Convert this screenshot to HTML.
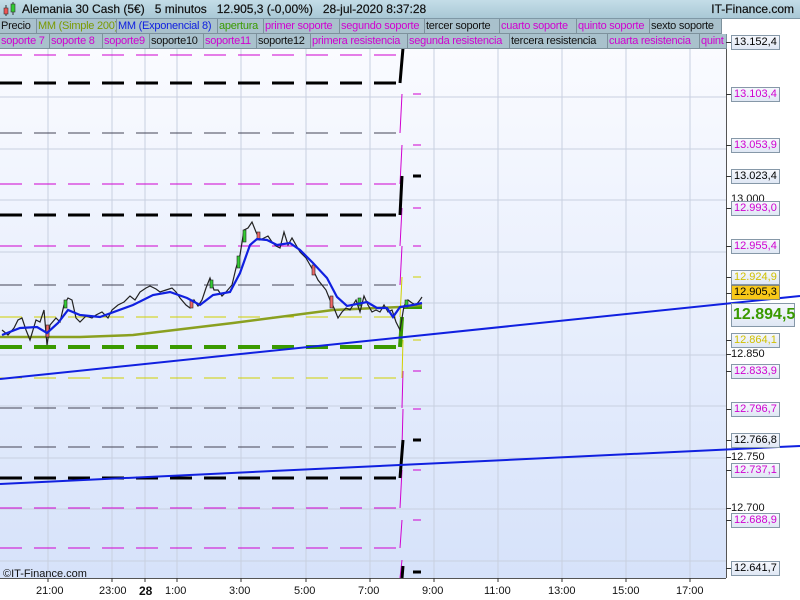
<!DOCTYPE html>
<html><head><meta charset="utf-8"><style>
*{margin:0;padding:0;box-sizing:border-box}
body{width:800px;height:600px;overflow:hidden;background:#fff;font-family:"Liberation Sans",sans-serif;position:relative}
#hdr{position:absolute;left:0;top:0;width:800px;height:19px;background:linear-gradient(#c4dde8,#a9c8d6);border-bottom:1px solid #7f98a6;font-size:12px;line-height:19px;color:#111;-webkit-text-stroke:0.2px #111}
.row{position:absolute;left:0;height:15px;display:flex;font-size:11px;line-height:14px;letter-spacing:-0.25px}
.row span{background:#a9c1cc;border-right:1px solid #7d919c;border-bottom:1px solid #7d919c;padding-left:1px;white-space:nowrap;overflow:hidden}
.m{color:#d000d0}.k{color:#111}.o{color:#7a9a00}.b{color:#1020e0}.g{color:#3a9a00}
.lb{position:absolute;left:731px;height:15px;width:49px;border:1px solid #8698a8;background:linear-gradient(#f6f8fd,#dfe7f4);font-size:11px;line-height:13px;padding-left:2px}
.tx{position:absolute;left:731px;font-size:11px;line-height:13px;color:#111}
.tk{position:absolute;left:726px;width:5px;height:1px;background:#333}
.ax{position:absolute;top:585px;font-size:11px;color:#111}
</style></head><body>
<div id="hdr">
<svg style="position:absolute;left:3px;top:2px" width="14" height="15"><line x1="3" y1="3" x2="3" y2="14" stroke="#333"/><rect x="1" y="6" width="4" height="6" fill="#e55" stroke="#333" stroke-width=".6"/><line x1="10" y1="0" x2="10" y2="13" stroke="#333"/><rect x="8" y="2" width="4" height="8" fill="#3c3" stroke="#333" stroke-width=".6"/></svg>
<span style="position:absolute;left:22px">Alemania 30 Cash (5€)&nbsp;&nbsp;&nbsp;5 minutos&nbsp;&nbsp;&nbsp;12.905,3 (-0,00%)&nbsp;&nbsp;&nbsp;28-jul-2020 8:37:28</span>
<span style="position:absolute;right:6px">IT-Finance.com</span>
</div>
<div class="row" style="top:19px">
<span class="k" style="width:37px">Precio</span><span class="o" style="width:80px">MM (Simple 200)</span><span class="b" style="width:101px">MM (Exponencial 8)</span><span class="g" style="width:46px">apertura</span><span class="m" style="width:76px">primer soporte</span><span class="m" style="width:85px">segundo soporte</span><span class="k" style="width:75px">tercer soporte</span><span class="m" style="width:77px">cuarto soporte</span><span class="m" style="width:73px">quinto soporte</span><span class="k" style="width:72px">sexto soporte</span>
</div>
<div class="row" style="top:34px">
<span class="m" style="width:50px">soporte 7</span><span class="m" style="width:53px">soporte 8</span><span class="m" style="width:47px">soporte9</span><span class="k" style="width:54px">soporte10</span><span class="m" style="width:53px">soporte11</span><span class="k" style="width:54px">soporte12</span><span class="m" style="width:97px">primera resistencia</span><span class="m" style="width:102px">segunda resistencia</span><span class="k" style="width:98px">tercera resistencia</span><span class="m" style="width:92px">cuarta resistencia</span><span class="m" style="width:27px">quint</span>
</div>
<svg style="position:absolute;left:0;top:49px" width="800" height="551">
<defs><linearGradient id="bg" x1="0" y1="0" x2="0" y2="1"><stop offset="0" stop-color="#fafbff"/><stop offset="1" stop-color="#d6e2fa"/></linearGradient></defs>
<g transform="translate(0,-49)">
<rect x="0" y="49" width="726" height="529" fill="url(#bg)"/>
<line x1="726.5" y1="49" x2="726.5" y2="578" stroke="#555"/>
<line x1="0" y1="578.5" x2="726" y2="578.5" stroke="#555"/>
<g stroke="#c8d0e0" stroke-width="1">
<line x1="48" y1="49" x2="48" y2="578"/><line x1="112" y1="49" x2="112" y2="578"/><line x1="145" y1="49" x2="145" y2="578"/><line x1="177" y1="49" x2="177" y2="578"/><line x1="241" y1="49" x2="241" y2="578"/><line x1="306" y1="49" x2="306" y2="578"/><line x1="370" y1="49" x2="370" y2="578"/><line x1="434" y1="49" x2="434" y2="578"/><line x1="498" y1="49" x2="498" y2="578"/><line x1="562" y1="49" x2="562" y2="578"/><line x1="626" y1="49" x2="626" y2="578"/><line x1="690" y1="49" x2="690" y2="578"/>
<line x1="0" y1="97" x2="726" y2="97"/><line x1="0" y1="149" x2="726" y2="149"/><line x1="0" y1="200" x2="726" y2="200"/><line x1="0" y1="252" x2="726" y2="252"/><line x1="0" y1="303" x2="726" y2="303"/><line x1="0" y1="355" x2="726" y2="355"/><line x1="0" y1="406" x2="726" y2="406"/><line x1="0" y1="458" x2="726" y2="458"/><line x1="0" y1="509" x2="726" y2="509"/><line x1="0" y1="561" x2="726" y2="561"/>
</g>
<g fill="none" stroke-dasharray="22,12">
<line x1="0" y1="55" x2="400" y2="55" stroke="#d000d0"/>
<line x1="0" y1="133" x2="400" y2="133" stroke="#445"/>
<line x1="0" y1="184" x2="400" y2="184" stroke="#d000d0"/>
<line x1="0" y1="246" x2="400" y2="246" stroke="#d000d0"/>
<line x1="0" y1="285" x2="400" y2="285" stroke="#445"/>
<line x1="0" y1="317" x2="400" y2="317" stroke="#d0d000"/>
<line x1="0" y1="378" x2="400" y2="378" stroke="#d0d000"/>
<line x1="0" y1="408" x2="400" y2="408" stroke="#445"/>
<line x1="0" y1="447" x2="400" y2="447" stroke="#445"/>
<line x1="0" y1="508" x2="400" y2="508" stroke="#d000d0"/>
<line x1="0" y1="548" x2="400" y2="548" stroke="#d000d0"/>
<line x1="0" y1="83" x2="400" y2="83" stroke="#000" stroke-width="3"/>
<line x1="0" y1="215" x2="400" y2="215" stroke="#000" stroke-width="3"/>
<line x1="0" y1="478" x2="400" y2="478" stroke="#000" stroke-width="3"/>
<line x1="0" y1="347" x2="400" y2="347" stroke="#3a9a00" stroke-width="4"/>
</g>
<g fill="none" stroke="#d000d0">
<path d="M400 133L402 94M413 94h8M400 184L402 145M413 145h8M400 246L402 208M413 208h8M400 285L402 246M413 246h8M402 408L403 371M413 371h8M402 447L403 409M413 409h8M400 508L402 470M413 470h8M400 548L402 520M413 520h8M400 578L402 560"/>
</g>
<g fill="none" stroke="#d0d000"><path d="M400 317L402 277M413 277h8M402 378L403 340M413 340h8"/></g>
<g fill="none" stroke="#000" stroke-width="3"><path d="M400 83L403 48M400 215L402 176M413 176h8M400 478L403 440M413 440h8M402 578L403 566M413 572h8"/></g>
<path d="M400 347L402 317" stroke="#3a9a00" stroke-width="4"/>
<path d="M404 307h18" stroke="#3a9a00" stroke-width="4"/>
<polyline fill="none" stroke="#8aa020" stroke-width="2.5" points="0,337 80,337 133,335 233,323 333,310 400,307 422,305"/>
<polyline fill="none" stroke="#222" stroke-width="1.2" points="2,330 8,335 14,328 18,320 22,318 26,330 30,340 36,320 40,322 44,310 47,345 50,325 56,318 60,322 64,305 68,298 72,300 76,318 80,322 86,316 92,318 96,315 102,312 108,318 112,310 118,305 124,302 130,296 135,300 140,292 146,288 150,286 156,289 160,292 166,290 172,288 176,292 180,298 186,305 190,308 194,300 198,306 202,300 206,288 210,278 214,290 218,290 222,296 226,292 232,285 236,268 240,255 244,230 248,228 252,222 256,232 260,240 264,238 268,236 272,242 276,246 280,248 284,232 288,245 292,238 296,245 300,252 306,258 310,265 314,272 318,280 322,285 326,290 330,300 334,308 338,318 342,312 346,308 350,310 356,300 360,312 364,296 368,305 372,312 376,310 380,312 384,305 388,312 392,310 396,322 400,330 404,306 408,300 412,303 416,305 420,300 422,297"/>
<g fill="#3c3" stroke="#222" stroke-width=".6"><rect x="243" y="230" width="3" height="12"/><rect x="237" y="256" width="3" height="12"/><rect x="64" y="300" width="3" height="8"/><rect x="210" y="280" width="3" height="8"/><rect x="358" y="298" width="3" height="8"/><rect x="405" y="300" width="3" height="7"/></g>
<g fill="#e66" stroke="#222" stroke-width=".6"><rect x="257" y="232" width="3" height="8"/><rect x="312" y="265" width="3" height="10"/><rect x="330" y="296" width="3" height="12"/><rect x="46" y="325" width="3" height="12"/><rect x="190" y="300" width="3" height="8"/></g>
<polyline fill="none" stroke="#1020e0" stroke-width="2.2" points="2,335 20,328 37,327 47,333 58,323 68,310 80,315 100,317 133,305 153,295 170,292 187,298 200,305 213,295 230,292 240,273 250,245 257,239 267,240 277,245 290,243 300,250 313,263 327,278 337,297 347,306 367,302 377,308 387,308 393,317 400,307 413,305 422,303"/>
<line x1="0" y1="379" x2="800" y2="296" stroke="#1020e0" stroke-width="2"/>
<line x1="0" y1="484" x2="800" y2="446" stroke="#1020e0" stroke-width="2"/>
<g stroke="#333"><line x1="48" y1="578" x2="48" y2="582"/><line x1="112" y1="578" x2="112" y2="582"/><line x1="145" y1="578" x2="145" y2="582"/><line x1="177" y1="578" x2="177" y2="582"/><line x1="241" y1="578" x2="241" y2="582"/><line x1="306" y1="578" x2="306" y2="582"/><line x1="370" y1="578" x2="370" y2="582"/><line x1="434" y1="578" x2="434" y2="582"/><line x1="498" y1="578" x2="498" y2="582"/><line x1="562" y1="578" x2="562" y2="582"/><line x1="626" y1="578" x2="626" y2="582"/><line x1="690" y1="578" x2="690" y2="582"/></g>
<text x="3" y="577" font-size="11" fill="#111" font-family="Liberation Sans">©IT-Finance.com</text>
</g></svg>
<div class="ax" style="left:36px">21:00</div><div class="ax" style="left:99px">23:00</div><div class="ax" style="left:139px;font-weight:bold;font-size:12px;top:584px">28</div><div class="ax" style="left:165px">1:00</div><div class="ax" style="left:229px">3:00</div><div class="ax" style="left:294px">5:00</div><div class="ax" style="left:358px">7:00</div><div class="ax" style="left:422px">9:00</div><div class="ax" style="left:484px">11:00</div><div class="ax" style="left:548px">13:00</div><div class="ax" style="left:612px">15:00</div><div class="ax" style="left:676px">17:00</div>
<div class="tk" style="top:42px"></div><div class="lb" style="top:35px">13.152,4</div>
<div class="tk" style="top:94px"></div><div class="lb m" style="top:87px">13.103,4</div>
<div class="tk" style="top:145px"></div><div class="lb m" style="top:138px">13.053,9</div>
<div class="tk" style="top:176px"></div><div class="lb" style="top:169px">13.023,4</div>
<div class="tx" style="top:193px">13.000</div>
<div class="tk" style="top:208px"></div><div class="lb m" style="top:201px">12.993,0</div>
<div class="tk" style="top:246px"></div><div class="lb m" style="top:239px">12.955,4</div>
<div class="tk" style="top:277px"></div><div class="lb" style="top:270px;color:#d0c000">12.924,9</div>
<div class="tk" style="top:293px"></div><div class="lb" style="top:285px;background:#f8c818;border-color:#887">12.905,3</div>
<div class="lb" style="top:303px;height:24px;width:64px;font-size:16px;line-height:22px;font-weight:bold;color:#3a9a00;padding-left:1px">12.894,5</div>
<div class="tk" style="top:340px"></div><div class="lb" style="top:333px;color:#d0c000">12.864,1</div>
<div class="tk" style="top:354px"></div><div class="tx" style="top:348px">12.850</div>
<div class="tk" style="top:371px"></div><div class="lb m" style="top:364px">12.833,9</div>
<div class="tk" style="top:409px"></div><div class="lb m" style="top:402px">12.796,7</div>
<div class="tk" style="top:440px"></div><div class="lb" style="top:433px">12.766,8</div>
<div class="tk" style="top:457px"></div><div class="tx" style="top:451px">12.750</div>
<div class="tk" style="top:470px"></div><div class="lb m" style="top:463px">12.737,1</div>
<div class="tk" style="top:508px"></div><div class="tx" style="top:502px">12.700</div>
<div class="tk" style="top:520px"></div><div class="lb m" style="top:513px">12.688,9</div>
<div class="tk" style="top:568px"></div><div class="lb" style="top:561px">12.641,7</div>
</body></html>
